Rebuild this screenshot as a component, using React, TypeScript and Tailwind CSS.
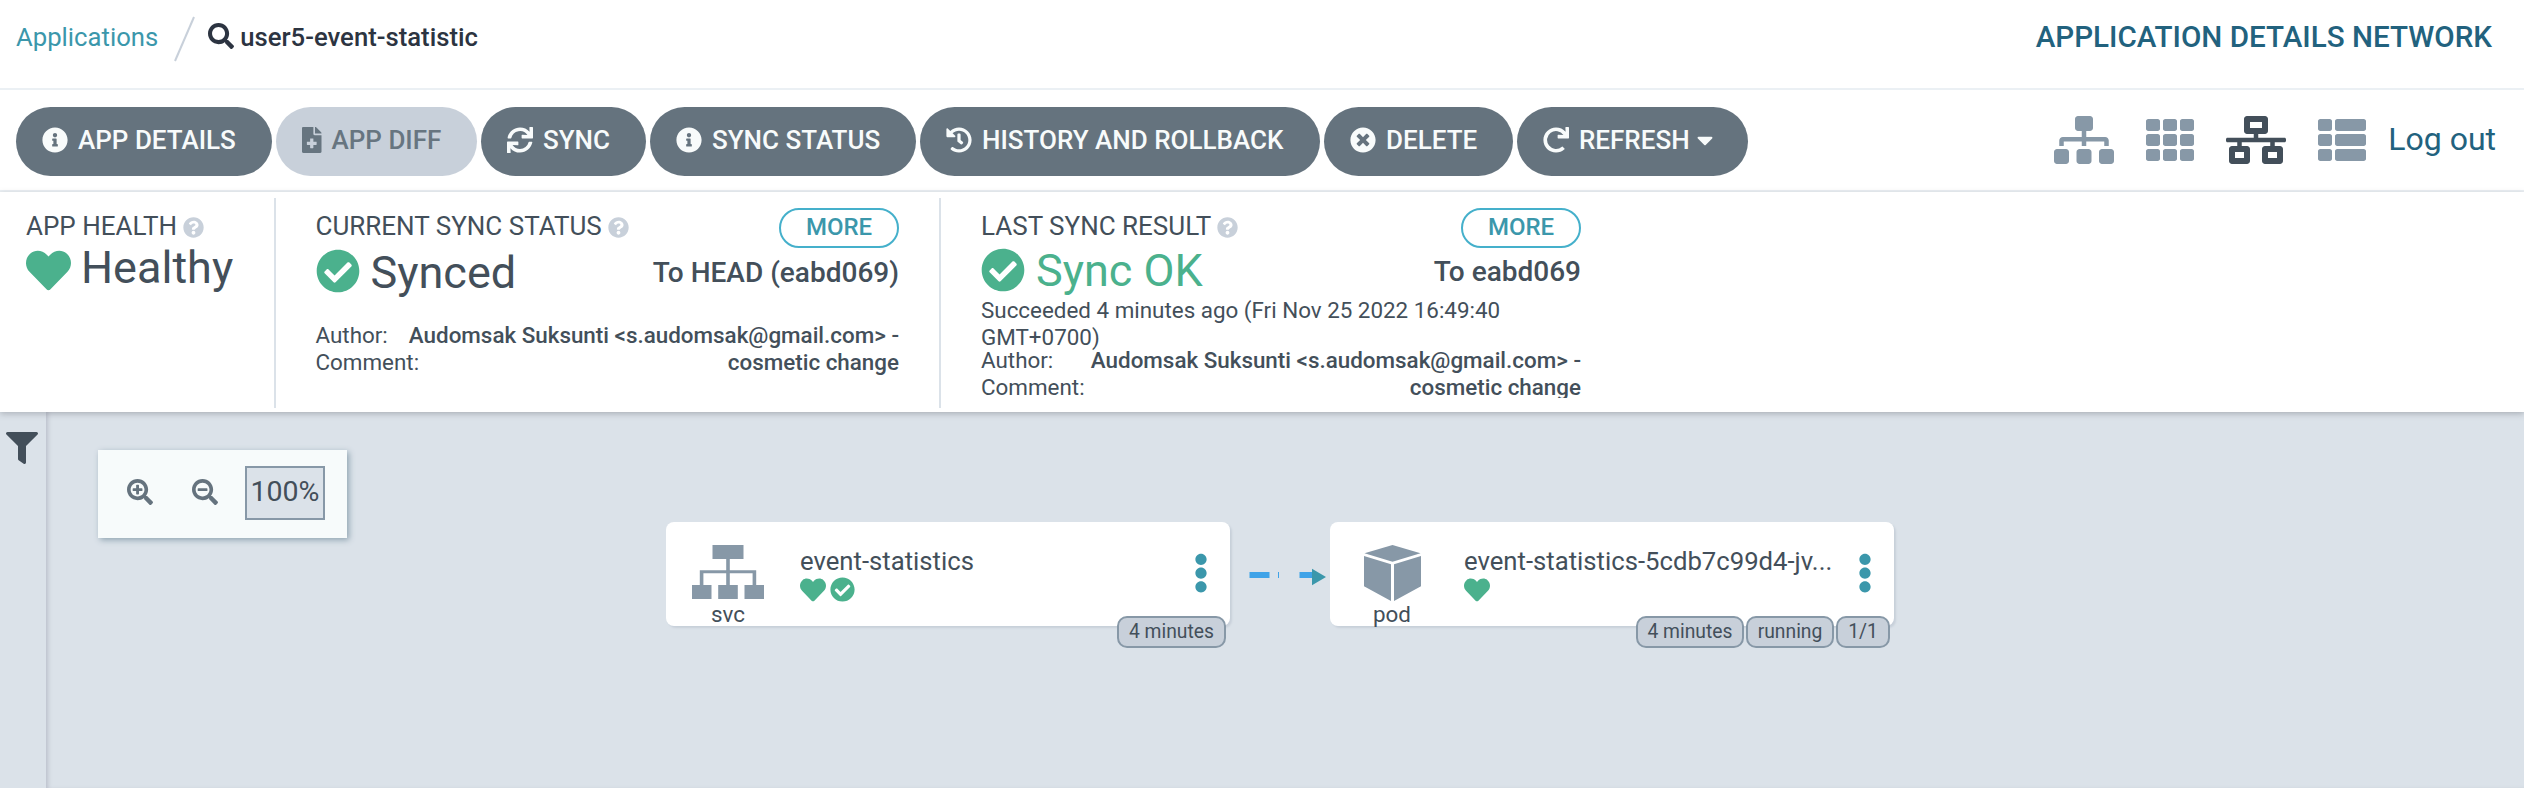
import React from "react";
import {
  FaCaretDown,
  FaCheckCircle,
  FaEllipsisV,
  FaFileMedical,
  FaFilter,
  FaHeart,
  FaHistory,
  FaInfoCircle,
  FaNetworkWired,
  FaQuestionCircle,
  FaRedo,
  FaSearch,
  FaSearchMinus,
  FaSearchPlus,
  FaSitemap,
  FaSync,
  FaTh,
  FaThList,
  FaTimesCircle,
} from "react-icons/fa";

type ActionProps = {
  icon: React.ReactNode;
  label: string;
  width: string;
  disabled?: boolean;
  caret?: boolean;
};

function Action({ icon, label, width, disabled, caret }: ActionProps) {
  const tone = disabled ? "bg-[#c8d0da] text-[#677580]" : "bg-[#65737e] text-[#f8fbfb]";
  return (
    <button
      className={`flex h-[69px] shrink-0 items-center rounded-full pb-[4px] pl-[26px] text-[26px] font-medium whitespace-nowrap ${tone} ${width}`}
    >
      {icon}
      <span className="mt-[2px] ml-[10px]">{label}</span>
      {caret && <FaCaretDown className="ml-[7px] h-[26px] w-[16px]" />}
    </button>
  );
}

function More() {
  return (
    <button className="h-[40px] w-[120px] shrink-0 rounded-full border-2 border-[#45b0cb] pb-[2px] text-[24px] leading-[34px] font-medium text-[#3b97ab]">
      MORE
    </button>
  );
}

function Heading({ children }: { children: React.ReactNode }) {
  return (
    <div className="flex h-[36px] items-center text-[26px] whitespace-nowrap">
      {children}
      <FaQuestionCircle className="mt-[2px] ml-[6px] size-[21px] text-[#c8d0da]" />
    </div>
  );
}

function Revision() {
  return (
    <div className="text-[22.4px] leading-[27px] whitespace-nowrap">
      <div className="flex justify-between">
        <span>Author:</span>
        <span className="font-medium">Audomsak Suksunti &lt;s.audomsak@gmail.com&gt; -</span>
      </div>
      <div className="flex justify-between">
        <span>Comment:</span>
        <span className="font-medium">cosmetic change</span>
      </div>
    </div>
  );
}

function ServiceIcon() {
  return (
    <svg className="h-[54px] w-[72px]" viewBox="0 0 72 54" fill="#8798a7">
      <path d="M20.5 0h31v14h-31zM0 40h19.5v14H0zM26.200 40h19.600v14H26.200zM52.500 40H72v14H52.500z" />
      <path d="M34.200 14h3.600v26h-3.600zM7.800 25.300h56.400v3H7.800zM7.800 25.300h3.600V40H7.800zM60.600 25.300h3.600V40h-3.600z" />
    </svg>
  );
}

function PodIcon() {
  return (
    <svg className="h-[56px] w-[57px]" viewBox="0 0 57 56" fill="#8798a7">
      <path d="M.5 8.300 28.500 0l28 8.300-28 8.400z" />
      <path d="M0 11l27 8.200V56L0 41.300zM57 11l-27 8.200V56l27-14.700z" />
    </svg>
  );
}

type NodeProps = {
  place: string;
  icon: React.ReactNode;
  kind: string;
  name: string;
  synced?: boolean;
  tags: { text: string; width: string }[];
};

function ResourceNode({ place, icon, kind, name, synced, tags }: NodeProps) {
  return (
    <div className={`absolute top-[110px] flex h-[104px] w-[564px] rounded-[8px] bg-white shadow-[2px_2px_2px_#c8d0da] ${place}`}>
      <div className="flex w-[124px] flex-col items-center pt-[23px]">
        <div className="flex h-[58px] items-start">{icon}</div>
        <span className="text-[22.4px] leading-[24px]">{kind}</span>
      </div>
      <div className="ml-[10px] w-[368px] pt-[24px]">
        <div className="text-[25.7px] leading-[30px] whitespace-nowrap">{name}</div>
        <div className="mt-px flex gap-[4px] text-[#4bb18d]">
          <FaHeart className="size-[26px]" />
          {synced && <FaCheckCircle className="size-[25px]" />}
        </div>
      </div>
      <FaEllipsisV className="mt-[31px] ml-[23px] h-[40px] w-[20px] text-[#3b97ab]" />
      <div className="absolute right-[4px] bottom-[-22px] flex gap-[2px]">
        {tags.map((t) => (
          <span
            key={t.text}
            className={`h-[32px] rounded-[10px] border-2 border-[#8798a7] bg-[#c8d0da] text-center text-[19.3px] leading-[28px] whitespace-nowrap ${t.width}`}
          >
            {t.text}
          </span>
        ))}
      </div>
    </div>
  );
}

export default function App() {
  return (
    <div className="flex h-[788px] w-[2524px] flex-col overflow-hidden bg-white font-[Roboto,'Liberation_Sans',sans-serif] text-[#434f5a]">
      <header className="flex h-[90px] shrink-0 items-center border-b-2 border-[#ebf0f4] pr-[32px] pb-[14px] pl-[16px] text-[25.7px]">
        <a className="text-[#3b97ab]">Applications</a>
        <svg className="mt-[4px] ml-[15px] h-[46px] w-[24px]" viewBox="0 0 24 46">
          <path d="M2 45 21 1" stroke="#c8d0da" strokeWidth="2" />
        </svg>
        <FaSearch className="ml-[11px] size-[26px] -translate-y-px text-[#2c3441]" />
        <span className="ml-[6px] font-medium text-[#2c3441]">user5-event-statistic</span>
        <h1 className="mt-px ml-auto text-[29.6px] font-medium text-[#22627e]">APPLICATION DETAILS NETWORK</h1>
      </header>

      <div className="flex h-[102px] shrink-0 justify-between border-b-2 border-[#ebf0f4] pt-[17px] pr-[28px] pl-[16px]">
        <div className="flex gap-[4px]">
          <Action width="w-[256px]" label="APP DETAILS" icon={<FaInfoCircle className="size-[26px]" />} />
          <Action width="w-[201px]" label="APP DIFF" disabled icon={<FaFileMedical className="h-[26px] w-[19.5px]" />} />
          <Action width="w-[165px]" label="SYNC" icon={<FaSync className="size-[26px]" />} />
          <Action width="w-[266px]" label="SYNC STATUS" icon={<FaInfoCircle className="size-[26px]" />} />
          <Action width="w-[400px]" label="HISTORY AND ROLLBACK" icon={<FaHistory className="size-[26px]" />} />
          <Action width="w-[189px]" label="DELETE" icon={<FaTimesCircle className="size-[26px]" />} />
          <Action width="w-[231px]" label="REFRESH" caret icon={<FaRedo className="size-[26px]" />} />
        </div>
        <div className="flex h-[66px] items-center text-[#8798a7]">
          <FaSitemap className="h-[48px] w-[60px]" />
          <FaTh className="ml-[32px] size-[48px]" />
          <FaNetworkWired className="ml-[32px] h-[48px] w-[60px] text-[#434f5a]" />
          <FaThList className="ml-[32px] size-[48px]" />
          <span className="ml-[22px] pb-[2px] text-[32px] whitespace-nowrap text-[#22627e]">Log out</span>
        </div>
      </div>

      <section className="relative z-10 flex h-[220px] shrink-0 bg-white pt-[6px] pb-[4px] shadow-[0_2px_6px_rgba(110,112,120,0.4)]">
        <div className="w-[276px] border-r-2 border-[#dbe2e9] pt-[10px] pl-[26px]">
          <Heading>APP HEALTH</Heading>
          <div className="flex h-[48px] items-center text-[45px]">
            <FaHeart className="mt-[5px] size-[45px] text-[#4bb18d]" />
            <span className="ml-[10px]">Healthy</span>
          </div>
        </div>
        <div className="w-[665px] border-r-2 border-[#dbe2e9] pt-[10px] pr-[40px] pl-[39.5px]">
          <div className="flex justify-between">
            <Heading>CURRENT SYNC STATUS</Heading>
            <More />
          </div>
          <div className="flex h-[48px] items-center text-[45px]">
            <FaCheckCircle className="-mt-[2px] size-[44px] text-[#4bb18d]" />
            <span className="mt-[2px] ml-[11px]">Synced</span>
            <span className="mt-[2px] ml-auto text-[28px] font-medium">To HEAD (eabd069)</span>
          </div>
          <div className="pt-[26px]">
            <Revision />
          </div>
        </div>
        <div className="h-[200px] w-[640px] overflow-hidden pt-[10px] pl-[40px]">
          <div className="flex h-[40px] justify-between">
            <Heading>LAST SYNC RESULT</Heading>
            <More />
          </div>
          <div className="flex h-[44px] items-center text-[45px] text-[#4bb18d]">
            <FaCheckCircle className="-mt-px size-[44px]" />
            <span className="mt-px ml-[11px]">Sync OK</span>
            <span className="mt-[3px] ml-auto text-[28px] font-medium text-[#434f5a]">To eabd069</span>
          </div>
          <div className="pt-[5px] text-[22.4px] leading-[27px]">
            Succeeded 4 minutes ago (Fri Nov 25 2022 16:49:40
            <br />
            GMT+0700)
          </div>
          <div className="-mt-[4px]">
            <Revision />
          </div>
        </div>
      </section>

      <main className="flex flex-1 bg-[#dbe2e9]">
        <aside className="w-[46px] pt-[20px] pl-[6px]">
          <FaFilter className="size-[32px] text-[#434f5a]" />
        </aside>
        <div className="relative flex-1 shadow-[inset_4px_0_4px_-2px_rgba(130,130,150,0.35)]">
          <div className="mt-[38px] ml-[52px] flex h-[88px] w-[249px] items-start bg-[#f7fbfb] pt-[16px] pl-[29px] text-[#65737e] shadow-[2px_2px_6px_#8fa4b1]">
            <FaSearchPlus className="mt-[13px] size-[26px]" />
            <FaSearchMinus className="mt-[13px] ml-[39px] size-[26px]" />
            <div className="ml-[27px] h-[54px] w-[80px] border-2 border-[#8798a7] bg-[#dbe2e9] text-center text-[28.5px] leading-[47px] text-[#434f5a]">
              100%
            </div>
          </div>

          <ResourceNode
            place="left-[620px]"
            icon={<ServiceIcon />}
            kind="svc"
            name="event-statistics"
            synced
            tags={[{ text: "4 minutes", width: "w-[109px]" }]}
          />
          <svg className="absolute top-[156px] left-[1203px] h-[18px] w-[78px]" viewBox="0 0 78 18">
            <path d="M.5 4h20v6H.5zM29 4h1v6h-1zM50.500 4H64v6H50.500z" fill="#3fa3e8" />
            <path d="M63 .7 77 9 63 17.300z" fill="#3b97ab" />
          </svg>
          <ResourceNode
            place="left-[1284px]"
            icon={<PodIcon />}
            kind="pod"
            name="event-statistics-5cdb7c99d4-jv..."
            tags={[
              { text: "4 minutes", width: "w-[108px]" },
              { text: "running", width: "w-[88px]" },
              { text: "1/1", width: "w-[54px]" },
            ]}
          />
        </div>
      </main>
    </div>
  );
}
